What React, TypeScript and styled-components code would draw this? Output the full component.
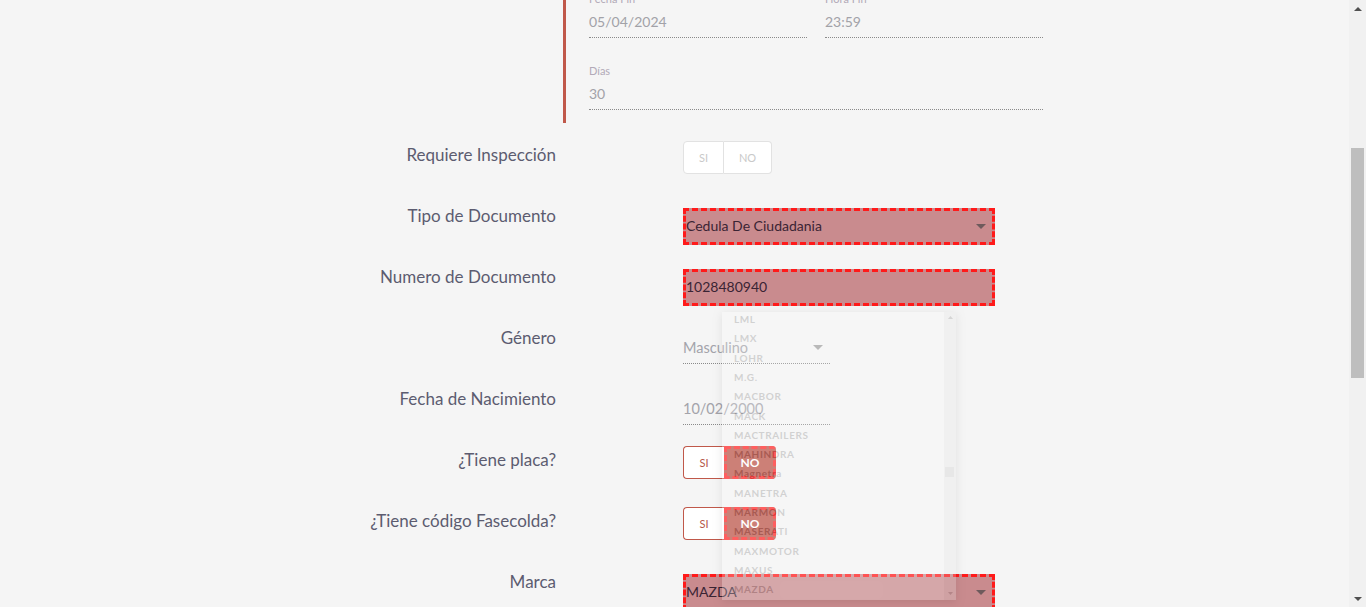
import { useLayoutEffect, useRef } from "react";
import styled, { createGlobalStyle } from "styled-components";

const GlobalStyle = createGlobalStyle`
  html, body {
    margin: 0;
    padding: 0;
    background: #f5f5f5;
  }
  body {
    font-family: Lato, "Liberation Sans", sans-serif;
  }
  * {
    box-sizing: border-box;
  }
`;

const marcas = [
  "LML",
  "LMX",
  "LOHR",
  "M.G.",
  "MACBOR",
  "MACK",
  "MACTRAILERS",
  "MAHINDRA",
  "Magnetra",
  "MANETRA",
  "MARMON",
  "MASERATI",
  "MAXMOTOR",
  "MAXUS",
  "MAZDA",
];

const Arrow = ({ color }: { color: string }) => (
  <svg width="10" height="5" viewBox="0 0 10 5">
    <path d="M0 0 L10 0 L5 5 Z" fill={color} />
  </svg>
);

const App = () => {
  const viewRef = useRef<HTMLDivElement>(null);

  useLayoutEffect(() => {
    if (viewRef.current) viewRef.current.scrollTop = 346;
  }, []);

  return (
    <>
      <GlobalStyle />
      <Screen>
        <Viewport ref={viewRef}>
          <Page>
            <Section>
              <FieldGrid>
                <Field>
                  <FieldLabel>Fecha Inicio</FieldLabel>
                  <FieldValue>06/03/2024</FieldValue>
                </Field>
                <Field>
                  <FieldLabel>Hora Inicio</FieldLabel>
                  <FieldValue>00:00</FieldValue>
                </Field>
                <Field>
                  <FieldLabel>Fecha Fin</FieldLabel>
                  <FieldValue>05/04/2024</FieldValue>
                </Field>
                <Field>
                  <FieldLabel>Hora Fin</FieldLabel>
                  <FieldValue>23:59</FieldValue>
                </Field>
                <Field $wide>
                  <FieldLabel>Días</FieldLabel>
                  <FieldValue>30</FieldValue>
                </Field>
              </FieldGrid>
            </Section>

            <Form>
              <Row>
                <Label>Requiere Inspección</Label>
                <Control>
                  <Toggle>
                    <ToggleOption $variant="disabled" $side="left">SI</ToggleOption>
                    <ToggleOption $variant="disabled" $side="right">NO</ToggleOption>
                  </Toggle>
                </Control>
              </Row>
              <Row>
                <Label>Tipo de Documento</Label>
                <Control>
                  <Flagged>
                    <span>Cedula De Ciudadania</span>
                    <Arrow color="#6e5a5c" />
                  </Flagged>
                </Control>
              </Row>
              <Row>
                <Label>Numero de Documento</Label>
                <Control>
                  <Flagged>
                    <span>1028480940</span>
                  </Flagged>
                </Control>
              </Row>
              <Row>
                <Label>Género</Label>
                <Control>
                  <Underlined>
                    <span>Masculino</span>
                    <Arrow color="#a3a3a3" />
                  </Underlined>
                </Control>
              </Row>
              <Row>
                <Label>Fecha de Nacimiento</Label>
                <Control>
                  <Underlined>
                    <span>10/02/2000</span>
                  </Underlined>
                </Control>
              </Row>
              <Row>
                <Label>¿Tiene placa?</Label>
                <Control>
                  <Toggle>
                    <ToggleOption $variant="idle" $side="left">SI</ToggleOption>
                    <ToggleOption $variant="active" $side="right">NO</ToggleOption>
                  </Toggle>
                </Control>
              </Row>
              <Row>
                <Label>¿Tiene código Fasecolda?</Label>
                <Control>
                  <Toggle>
                    <ToggleOption $variant="idle" $side="left">SI</ToggleOption>
                    <ToggleOption $variant="active" $side="right">NO</ToggleOption>
                  </Toggle>
                </Control>
              </Row>
              <Row>
                <Label>Marca</Label>
                <Control>
                  <Flagged>
                    <span>MAZDA</span>
                    <Arrow color="#6e5a5c" />
                  </Flagged>
                </Control>
              </Row>

              <Menu>
                <MenuList>
                  {marcas.map((m) => (
                    <MenuItem key={m} $hover={m === "MAZDA"}>
                      <span>{m}</span>
                    </MenuItem>
                  ))}
                </MenuList>
                <MenuScroll>
                  <ScrollArrow>
                    <svg width="5" height="3" viewBox="0 0 5 3">
                      <path d="M0 3 L5 3 L2.5 0 Z" fill="#777" />
                    </svg>
                  </ScrollArrow>
                  <MenuThumb />
                  <ScrollArrow>
                    <svg width="5" height="3" viewBox="0 0 5 3">
                      <path d="M0 0 L5 0 L2.5 3 Z" fill="#777" />
                    </svg>
                  </ScrollArrow>
                </MenuScroll>
              </Menu>
            </Form>
          </Page>
        </Viewport>

        <PageScrollbar>
          <BarButton>
            <svg width="8" height="4" viewBox="0 0 8 4">
              <path d="M0 4 L8 4 L4 0 Z" fill="#505050" />
            </svg>
          </BarButton>
          <BarTrack>
            <BarThumb />
          </BarTrack>
          <BarButton>
            <svg width="8" height="4" viewBox="0 0 8 4">
              <path d="M0 0 L8 0 L4 4 Z" fill="#505050" />
            </svg>
          </BarButton>
        </PageScrollbar>
      </Screen>
    </>
  );
};

const Screen = styled.div`
  display: flex;
  height: 100vh;
  background: #f5f5f5;
`;

const Viewport = styled.div`
  flex: 1;
  height: 100%;
  overflow-y: scroll;
  scrollbar-width: none;
  &::-webkit-scrollbar {
    display: none;
  }
`;

const PageScrollbar = styled.div`
  width: 17px;
  display: flex;
  flex-direction: column;
  background: #f1f1f1;
`;

const BarButton = styled.div`
  height: 17px;
  display: flex;
  align-items: center;
  justify-content: center;
`;

const BarTrack = styled.div`
  flex: 1;
  padding: 131px 2px 0;
`;

const BarThumb = styled.div`
  height: 230px;
  background: #bebebe;
`;

const Page = styled.div`
  padding: 252px 0 537px;
`;

const Section = styled.div`
  margin-left: 563px;
  width: 480px;
  border-left: 3px solid #c0584a;
  padding: 14px 0 13px 23px;
`;

const FieldGrid = styled.div`
  display: grid;
  grid-template-columns: 218px 218px;
  column-gap: 18px;
  row-gap: 26px;
`;

const Field = styled.div<{ $wide?: boolean }>`
  grid-column: ${(p) => (p.$wide ? "1 / span 2" : "auto")};
  display: flex;
  flex-direction: column;
  border-bottom: 1px dotted #8a8a8a;
`;

const FieldLabel = styled.label`
  font-size: 11px;
  line-height: 14px;
  color: #b2aab8;
`;

const FieldValue = styled.div`
  font-size: 14px;
  line-height: 31px;
  color: #a2a2a8;
`;

const Form = styled.div`
  position: relative;
  margin-top: 18px;
`;

const Row = styled.div`
  display: grid;
  grid-template-columns: 556px 1fr;
  column-gap: 127px;
  height: 61px;
`;

const Label = styled.div`
  text-align: right;
  font-size: 17px;
  line-height: 28px;
  color: #5c5c70;
`;

const Control = styled.div`
  display: flex;
  align-items: flex-start;
`;

const Toggle = styled.div`
  display: flex;
  height: 33px;
`;

const ToggleOption = styled.div<{
  $variant: "disabled" | "idle" | "active";
  $side: "left" | "right";
}>`
  display: flex;
  align-items: center;
  justify-content: center;
  width: ${(p) =>
    p.$side === "left" ? "41px" : p.$variant === "active" ? "52px" : "48px"};
  height: 33px;
  font-size: 11px;
  background: ${(p) => (p.$variant === "active" ? "#bd564b" : "#fff")};
  color: ${(p) =>
    p.$variant === "disabled"
      ? "#c9c9c9"
      : p.$variant === "active"
      ? "#fff"
      : "#b5584a"};
  font-weight: ${(p) => (p.$variant === "active" ? 700 : 400)};
  border: 1px solid
    ${(p) =>
      p.$variant === "disabled" ? "#e2e2e2" : p.$variant === "idle" ? "#c0584a" : "transparent"};
  border-radius: ${(p) => (p.$side === "left" ? "4px 0 0 4px" : "0 4px 4px 0")};
  ${(p) => (p.$side === "right" && p.$variant === "disabled" ? "border-left: 0;" : "")}
  ${(p) => (p.$side === "left" && p.$variant === "idle" ? "border-right: 0;" : "")}
  ${(p) =>
    p.$variant === "active"
      ? "outline: 3px dashed #ff2a2a; outline-offset: -3px; font-size: 12px;"
      : ""}
`;

const Flagged = styled.div`
  display: flex;
  align-items: center;
  justify-content: space-between;
  margin-top: 6px;
  width: 312px;
  height: 37px;
  padding: 0 6px 2px 0;
  background: #c98b8e;
  border: 3px dashed #ff1a1a;
  font-size: 14px;
  color: #3a2434;
  svg {
    margin-top: 2px;
  }
`;

const Underlined = styled.div`
  display: flex;
  align-items: center;
  justify-content: space-between;
  margin-top: 8px;
  width: 147px;
  height: 32px;
  padding: 0 7px 0 0;
  border-bottom: 1px dotted #8a8a8a;
  font-size: 14.5px;
  color: #a3a3aa;
`;

const Menu = styled.div`
  position: absolute;
  top: 171px;
  left: 722px;
  width: 234px;
  height: 288px;
  display: flex;
  background: #fcfcfc;
  box-shadow: 0 2px 8px rgba(0, 0, 0, 0.35);
  opacity: 0.25;
  overflow: hidden;
`;

const MenuList = styled.ul`
  flex: 1;
  list-style: none;
  margin: -2.6px 0 0;
  padding: 0;
`;

const MenuItem = styled.li<{ $hover?: boolean }>`
  height: 19.3px;
  display: flex;
  align-items: center;
  padding-left: 12px;
  font-size: 10px;
  font-weight: 700;
  letter-spacing: 0.6px;
  color: #6a6a6a;
  span {
    display: inline-block;
  }
  ${(p) =>
    p.$hover
      ? `
    position: relative;
    &::after {
      content: "";
      position: absolute;
      left: 58px;
      top: 1px;
      width: 103px;
      height: 18px;
      border-radius: 6px;
      background: rgba(255, 255, 255, 0.9);
    }
  `
      : ""}
`;

const MenuScroll = styled.div`
  width: 12px;
  display: flex;
  flex-direction: column;
  justify-content: space-between;
  align-items: center;
  padding: 3px 0 4px;
  background: #e2e2e2;
  position: relative;
`;

const ScrollArrow = styled.div`
  height: 5px;
  display: flex;
  align-items: center;
`;

const MenuThumb = styled.div`
  position: absolute;
  top: 155px;
  left: 1px;
  width: 9px;
  height: 10px;
  background: #c1c1c1;
`;

export default App;
